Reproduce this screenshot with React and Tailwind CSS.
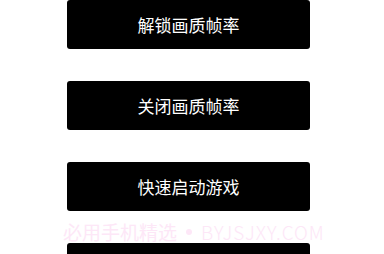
import React from 'react';

const ACTIONS = ['解锁画质帧率', '关闭画质帧率', '快速启动游戏'];

export default function App() {
    return (
        <div className="relative h-[254px] w-[384px] overflow-hidden bg-white" style={{ fontFamily: '"Noto Sans CJK SC", "Noto Sans", sans-serif' }}>
            <div className="flex flex-col gap-[32px] pl-[67px]">
                {ACTIONS.map(label => (
                    <button key={label} className="flex h-[49px] w-[243px] shrink-0 items-center justify-center rounded-[3px] bg-black text-[17px] text-white">
                        {label}
                    </button>
                ))}
                {/* next button, mostly below the fold */}
                <div className="h-[49px] w-[243px] shrink-0 rounded-[3px] bg-black" />
            </div>
            {/* watermark */}
            <div className="absolute left-[63px] top-[218px] flex items-center whitespace-nowrap text-[19px] leading-[28px] text-[#fde7f7]">
                <span>必用手机精选</span>
                <span className="ml-[9px] mr-[9px] h-[6px] w-[6px] rounded-full bg-[#fde7f7]" />
                <span className="font-light tracking-[1px]">BYJSJXY.COM</span>
            </div>
        </div>
    );
}
